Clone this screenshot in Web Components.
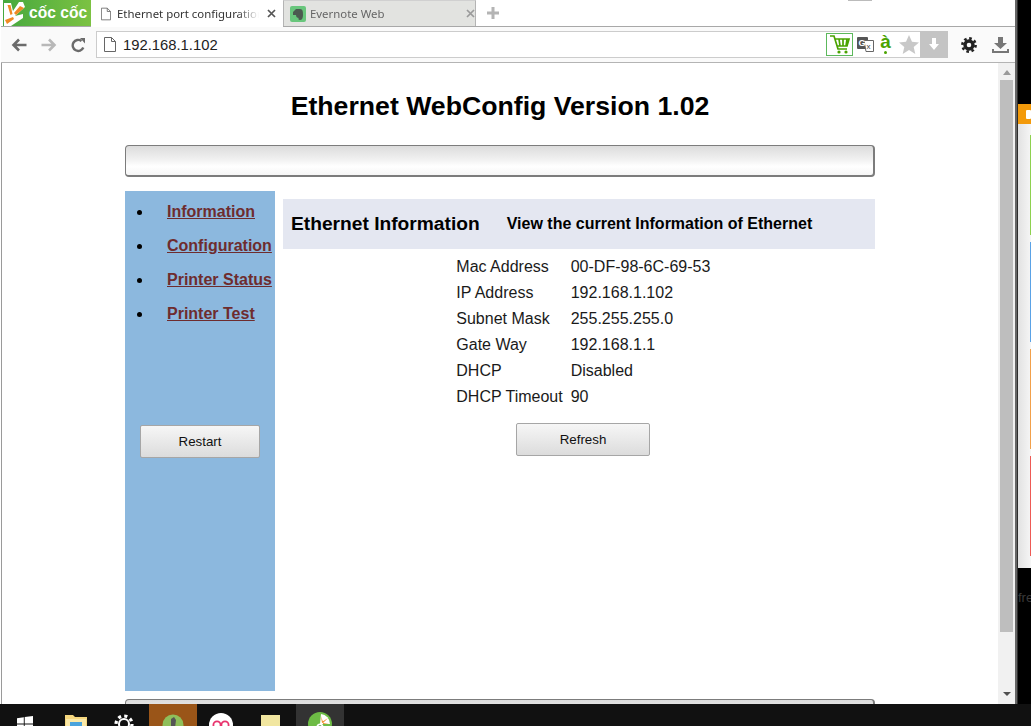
<!DOCTYPE html>
<html>
<head>
<meta charset="utf-8">
<title>Ethernet port configuration</title>
<style>
  html, body { margin: 0; height: 726px; overflow: hidden; background: #000; }
  body { font-family: "Liberation Sans", Arial, sans-serif; }
</style>
</head>
<body>
<desktop-shell>
  <browser-window>
    <browser-tabs></browser-tabs>
    <browser-toolbar address="192.168.1.102"></browser-toolbar>
    <page-view>
      <config-page>
        <side-menu slot="menu">
          <menu-link>Information</menu-link>
          <menu-link>Configuration</menu-link>
          <menu-link>Printer Status</menu-link>
          <menu-link>Printer Test</menu-link>
          <gray-button slot="action" style="width:120px">Restart</gray-button>
        </side-menu>
        <info-panel slot="panel"
          heading="Ethernet Information"
          sub="View the current Information of Ethernet">
          <info-row label="Mac Address" value="00-DF-98-6C-69-53"></info-row>
          <info-row label="IP Address" value="192.168.1.102"></info-row>
          <info-row label="Subnet Mask" value="255.255.255.0"></info-row>
          <info-row label="Gate Way" value="192.168.1.1"></info-row>
          <info-row label="DHCP" value="Disabled"></info-row>
          <info-row label="DHCP Timeout" value="90"></info-row>
          <gray-button slot="action" style="width:134px">Refresh</gray-button>
        </info-panel>
      </config-page>
    </page-view>
  </browser-window>
  <side-strip></side-strip>
</desktop-shell>
<task-bar></task-bar>

<script>
// small helper: every element gets an open shadow root filled from a template
function register(name, html, setup) {
  const template = document.createElement('template');
  template.innerHTML = html;
  customElements.define(name, class extends HTMLElement {
    constructor() {
      super();
      this.attachShadow({ mode: 'open' });
      this.shadowRoot.appendChild(template.content.cloneNode(true));
    }
    connectedCallback() {
      if (setup) setup(this, this.shadowRoot);
    }
  });
}

const docIcon = (w, h) => `<svg width="${w}" height="${h}" viewBox="0 0 12 15">
  <path d="M.5.5h7l4 4v10H.5z" fill="#fff" stroke="#666"/><path d="M7.5.5v4h4" fill="none" stroke="#666"/></svg>`;

register('desktop-shell', `
  <style>
    :host { display: flex; height: 704px; overflow: hidden; }
  </style>
  <slot></slot>
`);

register('browser-window', `
  <style>
    :host {
      display: flex; flex-direction: column;
      width: 1014px; height: 704px;
      padding-left: 1px;
      background: #fff;
      border-right: 2px solid #666;
      position: relative;
      flex: none;
    }
    .edge { position: absolute; left: 1px; top: 27px; bottom: 0; width: 1px; background: #9a9a9a; }
  </style>
  <div class="edge"></div>
  <slot></slot>
`);

register('browser-tabs', `
  <style>
    :host {
      display: flex; height: 27px; flex: none;
      box-sizing: border-box;
      border-bottom: 1px solid #a8a8a8;
      font: 11.4px "Noto Sans", "Open Sans", sans-serif;
      position: relative;
    }
    .logo {
      width: 88px; height: 26px; margin-left: 2px;
      display: flex; align-items: center; gap: 2px;
      background: linear-gradient(90deg, #46a83e, #7cc242);
      color: #fff;
      font: bold 15.6px "Liberation Sans", sans-serif;
      white-space: nowrap;
      overflow: hidden;
      flex: none;
    }
    .tab {
      width: 192px; height: 26px; box-sizing: border-box;
      display: flex; align-items: center;
      padding-left: 10px;
      color: #333;
      flex: none;
    }
    .tab.on { background: #fff; height: 27px; position: relative; z-index: 1; }
    .tab.off { width: 193px; background: #e2e3e0; border: 1px solid #b4b4b4; border-bottom: 0; border-top-color: #d0d0d0; padding-left: 6px; color: #666; }
    .title { margin-left: 6px; width: 142px; white-space: nowrap; overflow: hidden;
      -webkit-mask-image: linear-gradient(90deg, #000 85%, transparent); mask-image: linear-gradient(90deg, #000 85%, transparent); }
    .off .title { margin-left: 4px; width: 151px; }
    .close { margin-left: 8px; }
    .off .close { margin-left: 5px; }
    .plus { margin-left: 10px; align-self: center; }
    .mark { position: absolute; left: 847px; top: 0; width: 24px; height: 1px; background: #bbb; }
  </style>
  <div class="logo">
    <svg width="24" height="26" viewBox="0 0 24 26">
      <path d="M1 26V3h7l2 8 6-9h4l2 5-10 9 8-2v4L8 26z" fill="#fff"/>
      <path d="M4.500 5h3l2 9-2 1zM17 6l4 2-8 7-2-2zM2 20l8-3 1 2-7 5z" fill="#f08a24"/>
    </svg>
    <span>cốc cốc</span>
  </div>
  <div class="tab on">
    ${docIcon(10, 14)}
    <span class="title">Ethernet port configuration</span>
    <svg class="close" width="9" height="9" viewBox="0 0 9 9"><path d="M1 1l7 7M8 1L1 8" stroke="#555" stroke-width="1.7"/></svg>
  </div>
  <div class="tab off">
    <svg width="16" height="16" viewBox="0 0 16 16">
      <rect width="16" height="16" rx="2" fill="#68c67c"/>
      <path d="M4 5l2-2h4c3 0 3 3 3 6 0 3-1 5-3 5-2 0-2-2-1-2-2 0-3-1-3-3H3V6z" fill="#4b5a50"/>
    </svg>
    <span class="title">Evernote Web</span>
    <svg class="close" width="9" height="9" viewBox="0 0 9 9"><path d="M1 1l7 7M8 1L1 8" stroke="#9a9a9a" stroke-width="1.7"/></svg>
  </div>
  <svg class="plus" width="14" height="14" viewBox="0 0 14 14"><path d="M7 1v12M1 7h12" stroke="#b4b4b4" stroke-width="3"/></svg>
  <div class="mark"></div>
`);

register('browser-toolbar', `
  <style>
    :host {
      display: flex; align-items: center;
      height: 36px; flex: none; box-sizing: border-box;
      background: #fafafa;
      border-bottom: 1px solid #b4b4b4;
      position: relative;
      padding-left: 10px;
    }
    .nav { display: flex; gap: 14px; width: 85px; flex: none; margin-top: 1px; }
    .omni {
      display: flex; align-items: center;
      width: 852px; height: 27px; box-sizing: border-box;
      margin-top: -1px;
      border: 1px solid #ccc; border-right: 0;
      background: #fff;
      flex: none;
    }
    .url { margin-left: 7px; padding-top: 2px; font: 14.8px "Liberation Sans", sans-serif; color: #222; }
    .page { margin-left: 7px; display: flex; }
    .tools { margin-left: auto; display: flex; align-items: center; height: 100%; }
    .cart { width: 27px; height: 23px; box-sizing: border-box; border: 1px solid #5cb85c; display: flex; align-items: center; justify-content: center; }
    .tr { margin-left: 4px; }
    .a { margin-left: 5px; width: 13px; height: 24px; color: #4aa300; font: bold 19px/20px "Liberation Sans", sans-serif; text-align: center; position: relative; }
    .a::after { content: ""; position: absolute; left: 5px; top: 19px; width: 3px; height: 3px; border-radius: 50%; background: #4aa300; }
    .star { margin-left: 7px; }
    .dl { margin-left: 1px; width: 28px; height: 27px; background: #c4c4c4; display: flex; align-items: center; justify-content: center; }
    .gear { margin-left: 13px; display: flex; }
    .save { margin-left: 15px; display: flex; }
  </style>
  <div class="nav">
    <svg width="16" height="14" viewBox="0 0 16 14"><path d="M15.500 7H3M8 1.500L2.500 7 8 12.500" fill="none" stroke="#6b6b6b" stroke-width="2.600"/></svg>
    <svg width="16" height="14" viewBox="0 0 16 14"><path d="M.5 7H13M8 1.500L13.500 7 8 12.500" fill="none" stroke="#b8b8b8" stroke-width="2.600"/></svg>
    <svg width="15" height="15" viewBox="0 0 15 15"><path d="M12.300 9.500A5.500 5.500 0 1 1 10.500 3" fill="none" stroke="#6b6b6b" stroke-width="2.400"/><path d="M9 0l5 0v5.500z" fill="#6b6b6b"/></svg>
  </div>
  <div class="omni">
    <span class="page">${docIcon(12, 15)}</span>
    <span class="url"></span>
    <div class="tools">
      <div class="cart">
        <svg width="22" height="20" viewBox="0 0 22 20"><path d="M1 2h4l4 13h9M6 5h14l-2 7H8M10 5l1 7M14 5v7M18 5l-1 7" fill="none" stroke="#4aa300" stroke-width="1.700"/><circle cx="10" cy="18" r="1.600" fill="#4aa300"/><circle cx="17" cy="18" r="1.600" fill="#4aa300"/></svg>
      </div>
      <svg class="tr" width="17" height="15" viewBox="0 0 17 15">
        <rect x="0" y="0" width="11" height="12" rx="1" fill="#555"/>
        <path d="M7 3.500h9.500V14.500H9z" fill="#fff" stroke="#666"/>
        <text x="1.500" y="9" font-size="9" font-weight="bold" fill="#fff" font-family="Liberation Sans">G</text>
        <text x="9.500" y="12" font-size="8" fill="#444" font-family="Liberation Sans">x</text>
      </svg>
      <span class="a">à</span>
      <svg class="star" width="20" height="19" viewBox="0 0 20 19"><path d="M10 0l3 6.800 7 .6-5.300 4.700 1.600 6.900L10 15l-6.300 3.900 1.600-6.900L0 7.400l7-.6z" fill="#c8c8c8"/></svg>
      <div class="dl"><svg width="10" height="12" viewBox="0 0 10 12"><path d="M3 0h4v6h3l-5 6-5-6h3z" fill="#fff"/></svg></div>
    </div>
  </div>
  <span class="gear"><svg width="16" height="16" viewBox="-8 -8 16 16"><circle r="4" fill="none" stroke="#222" stroke-width="3.400"/><circle r="6.600" fill="none" stroke="#222" stroke-width="2.600" stroke-dasharray="2.590 2.590"/></svg></span>
  <span class="save"><svg width="17" height="16" viewBox="0 0 17 16"><path d="M6 0h5v6h4l-6.500 6L2 6h4zM0 12h2v2h13v-2h2v4H0z" fill="#777"/></svg></span>
`, (el, root) => {
  root.querySelector('.url').textContent = el.getAttribute('address');
});

register('page-view', `
  <style>
    :host { display: flex; flex: 1; min-height: 0; overflow: hidden; padding-left: 1px; }
    .content { flex: 1; min-width: 0; overflow: hidden; }
    .bar { width: 17px; flex: none; background: #f1f1f1; display: flex; flex-direction: column; align-items: center; }
    .up { margin-top: 7px; width: 0; height: 0; border: 4px solid transparent; border-top: 0; border-bottom: 5px solid #9a9a9a; }
    .thumb { margin-top: 5px; width: 13px; height: 552px; background: #bebebe; }
    .down { margin-top: 60px; width: 0; height: 0; border: 4px solid transparent; border-bottom: 0; border-top: 4px solid #505050; }
  </style>
  <div class="content"><slot></slot></div>
  <div class="bar"><div class="up"></div><div class="thumb"></div><div class="down"></div></div>
`);

register('round-bar', `
  <style>
    :host {
      display: block; height: 32px; box-sizing: border-box; flex: none;
      border: 1px solid #7c7c7c; border-width: 1px 2px 2px 1px;
      border-radius: 4px;
      background: linear-gradient(#dcdcdc, #f0f0f0 45%, #fff 70%, #f6f6f6);
    }
  </style>
`);

register('config-page', `
  <style>
    :host { display: block; width: 750px; margin: 0 auto; font-family: "Liberation Sans", Arial, sans-serif; }
    h1 { margin: 28px 0 23px; font-size: 26.67px; line-height: 31px; text-align: center; color: #000; }
    .cols { display: flex; gap: 8px; margin: 14px 0 8px; }
  </style>
  <h1>Ethernet WebConfig Version 1.02</h1>
  <round-bar></round-bar>
  <div class="cols">
    <slot name="menu"></slot>
    <slot name="panel"></slot>
  </div>
  <round-bar></round-bar>
`);

register('side-menu', `
  <style>
    :host {
      display: flex; flex-direction: column; flex: none;
      width: 150px; height: 500px; box-sizing: border-box;
      background: #8cb8de;
      padding: 4px 0 0 28px;
    }
    .action { display: flex; margin: 94px 0 0 -13px; }
  </style>
  <slot></slot>
  <div class="action"><slot name="action"></slot></div>
`);

register('menu-link', `
  <style>
    :host { display: list-item; list-style: disc; height: 34px; line-height: 34px; white-space: nowrap; color: #000; }
    a { margin-left: 14px; font: bold 16px "Liberation Sans", sans-serif; color: #6e2c2e; text-decoration: underline; }
  </style>
  <a href="#"><slot></slot></a>
`);

register('gray-button', `
  <style>
    :host {
      display: flex; align-items: center; justify-content: center;
      height: 33px; box-sizing: border-box;
      border: 1px solid #a6a6a6; border-radius: 2px;
      background: linear-gradient(#f6f6f6, #dcdcdc);
      font: 13.33px "Liberation Sans", sans-serif; color: #111;
    }
  </style>
  <slot></slot>
`);

register('info-panel', `
  <style>
    :host { display: flex; flex-direction: column; flex: 1; margin-top: 8px; min-width: 0; }
    .head {
      display: flex; align-items: center;
      height: 50px; padding-left: 8px; box-sizing: border-box;
      background: #e4e7f1; color: #000;
    }
    h2 { margin: 0; font-size: 19.2px; }
    h3 { margin: 0 0 0 27px; font-size: 16px; }
    .body { padding-left: 8px; display: flex; flex-direction: column; align-items: center; }
    .rows { display: grid; grid-template-columns: auto 139px; column-gap: 8px; margin-top: 5px; }
    .action { margin-top: 13px; display: flex; }
  </style>
  <div class="head"><h2></h2><h3></h3></div>
  <div class="body">
    <div class="rows"><slot></slot></div>
    <div class="action"><slot name="action"></slot></div>
  </div>
`, (el, root) => {
  root.querySelector('h2').textContent = el.getAttribute('heading');
  root.querySelector('h3').textContent = el.getAttribute('sub');
});

register('info-row', `
  <style>
    :host { display: contents; font: 16px/26px "Liberation Sans", sans-serif; color: #1a1a1a; }
    span { white-space: nowrap; }
  </style>
  <span class="k"></span><span class="v"></span>
`, (el, root) => {
  root.querySelector('.k').textContent = el.getAttribute('label');
  root.querySelector('.v').textContent = el.getAttribute('value');
});

register('side-strip', `
  <style>
    :host {
      display: flex; flex-direction: column; flex: 1;
      background: #000; border-left: 1px solid #2e2e2e; overflow: hidden;
    }
    .top { height: 104px; flex: none; }
    .orange { height: 20px; flex: none; background: #f39a0a; display: flex; align-items: center; padding-left: 8px; }
    .orange i { display: block; width: 8px; height: 9px; background: #fff; border-radius: 1px; }
    .list {
      height: 444px; flex: none; box-sizing: border-box;
      background: linear-gradient(90deg, #e2e2e2, #f6f6f6);
      padding-top: 11px; display: flex; flex-direction: column; gap: 7px; align-items: flex-end;
    }
    .list i { display: block; width: 1px; height: 100px; }
    .fre { margin-top: 22px; color: #3a3a3a; font: 13px "Liberation Sans", sans-serif; }
  </style>
  <div class="top"></div>
  <div class="orange"><i></i></div>
  <div class="list">
    <i style="background:#8ed14f"></i>
    <i style="background:#5aa2e6"></i>
    <i style="background:#f2a04a"></i>
    <i style="background:#ee5a55"></i>
  </div>
  <div class="fre">fre</div>
`);

register('task-bar', `
  <style>
    :host { display: flex; height: 22px; background: #111; overflow: hidden; }
    .cell { flex: none; width: 48px; height: 22px; display: flex; justify-content: center; padding-top: 10px; box-sizing: border-box; overflow: hidden; }
    .wide { width: 51px; }
    .first { width: 50px; padding-top: 12px; }
    .hot { background: #9a5518; }
    .cur { background: #333; padding-top: 8px; }
    svg { flex: none; }
  </style>
  <div class="cell first">
    <svg width="16" height="16" viewBox="0 0 16 16"><path d="M0 2.200l6.800-1v6.300H0zM7.700 1.100L16 0v7.500H7.700zM0 8.400h6.800v6.400L0 13.800zM7.700 8.400H16V16l-8.300-1.200z" fill="#fff"/></svg>
  </div>
  <div class="cell wide">
    <svg width="22" height="18" viewBox="0 0 22 18"><path d="M0 1h8l2 2h12v15H0z" fill="#f5d77e"/><path d="M1 5h20v13H1z" fill="#fbe9a8"/><rect x="5" y="8" width="12" height="5" fill="#4aa3dc"/></svg>
  </div>
  <div class="cell" style="padding-right:2px">
    <svg width="20" height="20" viewBox="-10 -10 20 20"><circle r="5" fill="none" stroke="#fff" stroke-width="2"/><circle r="8" fill="none" stroke="#fff" stroke-width="3.200" stroke-dasharray="3.140 3.140"/></svg>
  </div>
  <div class="cell hot">
    <svg width="22" height="22" viewBox="0 0 22 22"><circle cx="11" cy="11" r="10.500" fill="#8fbf5a"/><path d="M9 5l3-2 2 3-1 8H9z" fill="#555"/><circle cx="16" cy="18" r="6" fill="#1f9e3a"/></svg>
  </div>
  <div class="cell" style="padding-top:9px">
    <svg width="24" height="24" viewBox="0 0 24 24"><circle cx="12" cy="12" r="12" fill="#fff"/><circle cx="8" cy="12" r="3.600" fill="none" stroke="#e8336d" stroke-width="1.800"/><circle cx="16" cy="12" r="3.600" fill="none" stroke="#e8336d" stroke-width="1.800"/></svg>
  </div>
  <div class="cell wide" style="padding-top:11px">
    <svg width="19" height="19" viewBox="0 0 19 19"><rect width="19" height="19" fill="#f1e6a0"/></svg>
  </div>
  <div class="cell cur">
    <svg width="24" height="24" viewBox="0 0 24 24">
      <circle cx="12" cy="12" r="12" fill="#6dbb45"/>
      <path d="M12 12L13 2a10 10 0 0 1 9 10z" fill="#fff"/>
      <path d="M13 4l2 6-1 1zM20 6l-5 5-1-1zM21 12l-6 0v-1z" fill="#f08a24"/>
      <circle cx="12" cy="15" r="3.500" fill="#fff"/>
      <circle cx="12" cy="15" r="1.800" fill="#4b8f2c"/>
    </svg>
  </div>
`);
</script>
</body>
</html>
